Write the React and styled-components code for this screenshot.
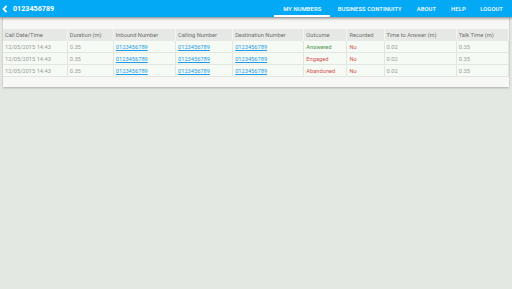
import React from 'react';
import styled, { createGlobalStyle } from 'styled-components';

const GlobalStyle = createGlobalStyle`
  html, body {
    margin: 0;
    padding: 0;
    background: #e4e8e3;
    font-family: Roboto, "Liberation Sans", sans-serif;
  }
`;

const Page = styled.div`
  width: 512px;
  height: 289px;
  background: #e4e8e3;
  display: flex;
  flex-direction: column;
`;

const Header = styled.header`
  position: relative;
  z-index: 2;
  height: 17px;
  background: #03a9f4;
  display: flex;
  align-items: stretch;
  justify-content: space-between;
  box-shadow: 0 1px 3px rgba(0, 0, 0, 0.55);
`;

const TitleBox = styled.div`
  display: flex;
  align-items: center;
  gap: 5px;
  padding-left: 2px;
  color: #fff;
  font-size: 7.2px;
  font-weight: 700;
`;

const Nav = styled.nav`
  display: flex;
  align-items: stretch;
  padding-right: 2px;
`;

const NavItem = styled.div`
  display: flex;
  align-items: center;
  padding: 2px ${(p) => p.$pad || 7.5}px 0;
  color: #fff;
  font-size: 5.8px;
  font-weight: 500;
  letter-spacing: 0.1px;
  border-bottom: 2px solid ${(p) => (p.$active ? '#fff' : 'transparent')};
  box-sizing: border-box;
`;

const Panel = styled.div`
  margin: 0 3px;
  background: #f7f8f6;
  padding: 12px 0 10px;
  box-shadow: 0 1px 2px rgba(0, 0, 0, 0.25);
`;

const Table = styled.table`
  width: 100%;
  border-collapse: collapse;
  font-size: 5.7px;
`;

const Th = styled.th`
  text-align: left;
  font-weight: 400;
  color: #707070;
  background: #e5e8e4;
  height: 12px;
  padding: 0 0 0 2px;
  border-right: 1px solid #f2f4f1;
  white-space: nowrap;
`;

const Td = styled.td`
  height: 11px;
  padding: 0 0 0 2px;
  background: #f5faf4;
  border-right: 1px solid #e2e6e1;
  border-bottom: 1px solid #e2e6e1;
  white-space: nowrap;
  color: ${(p) => p.$color || '#9a9a9a'};
`;

const Link = styled.span`
  color: #1e9be8;
  text-decoration: underline;
`;

const rows = [
  { outcome: 'Answered', color: '#4a954a' },
  { outcome: 'Engaged', color: '#d8504c' },
  { outcome: 'Abandoned', color: '#d8504c' },
];

const widths = [64, 46, 62, 57, 71, 43, 37, 72, 52];

export default function App() {
  return (
    <Page>
      <GlobalStyle />
      <Header>
        <TitleBox>
          <svg width="6" height="8" viewBox="0 0 6 8">
            <path d="M4.6 0.8 L1.6 4 L4.6 7.2" stroke="#fff" strokeWidth="1.8" fill="none" />
          </svg>
          0123456789
        </TitleBox>
        <Nav>
          <NavItem $active $pad={9}>MY NUMBERS</NavItem>
          <NavItem>BUSINESS CONTINUITY</NavItem>
          <NavItem>ABOUT</NavItem>
          <NavItem>HELP</NavItem>
          <NavItem $pad={7}>LOGOUT</NavItem>
        </Nav>
      </Header>
      <Panel>
        <Table>
          <colgroup>
            {widths.map((w, i) => (
              <col key={i} style={{ width: w }} />
            ))}
          </colgroup>
          <thead>
            <tr>
              <Th>Call Date/Time</Th>
              <Th>Duration (m)</Th>
              <Th>Inbound Number</Th>
              <Th>Calling Number</Th>
              <Th>Destination Number</Th>
              <Th>Outcome</Th>
              <Th>Recorded</Th>
              <Th>Time to Answer (m)</Th>
              <Th>Talk Time (m)</Th>
            </tr>
          </thead>
          <tbody>
            {rows.map((r, i) => (
              <tr key={i}>
                <Td>12/05/2015 14:43</Td>
                <Td>0.35</Td>
                <Td><Link>0123456789</Link></Td>
                <Td><Link>0123456789</Link></Td>
                <Td><Link>0123456789</Link></Td>
                <Td $color={r.color}>{r.outcome}</Td>
                <Td $color="#d8504c">No</Td>
                <Td>0.02</Td>
                <Td>0.35</Td>
              </tr>
            ))}
          </tbody>
        </Table>
      </Panel>
    </Page>
  );
}
